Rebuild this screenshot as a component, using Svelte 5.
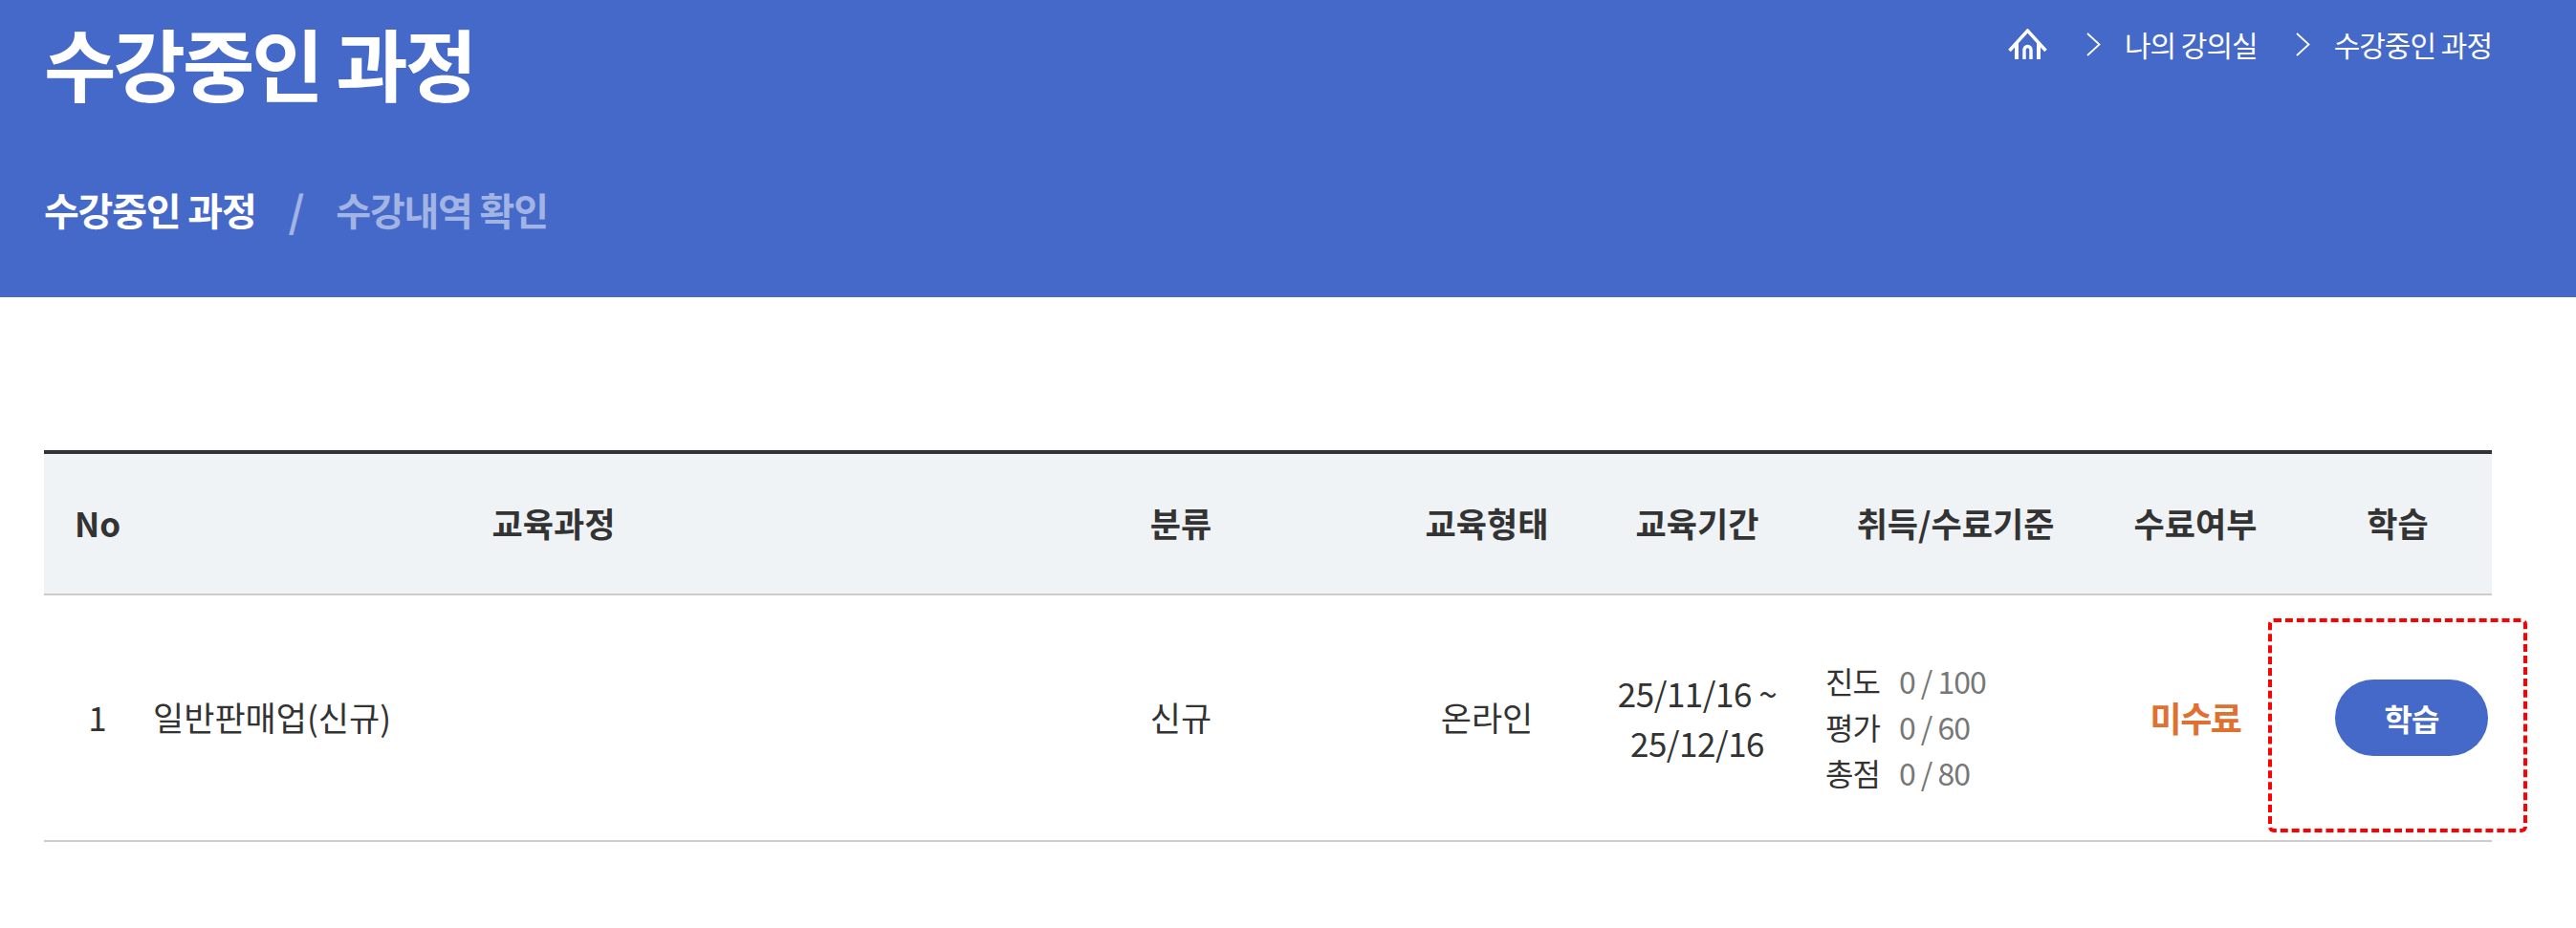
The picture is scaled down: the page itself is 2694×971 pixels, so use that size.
<script lang="ts">
	type Criterion = { label: string; score: string };

	const columns = ['No', '교육과정', '분류', '교육형태', '교육기간', '취득/수료기준', '수료여부', '학습'];

	const criteria: Criterion[] = [
		{ label: '진도', score: '0 / 100' },
		{ label: '평가', score: '0 / 60' },
		{ label: '총점', score: '0 / 80' }
	];
</script>

<header class="hero">
	<div class="hero-top">
		<h1>수강중인 과정</h1>
		<nav class="crumbs">
			<svg class="home" viewBox="0 0 41 32" width="41" height="32" aria-hidden="true">
				<path d="M1.5 23 20.5 2 39.5 23" fill="none" stroke="#fff" stroke-width="3.4" />
				<path d="M7 15v17h4V11zM34 15v17h-4V11z" fill="#fff" />
				<path d="M17 32V22a3.5 3.5 0 0 1 7 0v10" fill="none" stroke="#fff" stroke-width="3.4" />
			</svg>
			<svg class="chev" viewBox="0 0 15 25" width="15" height="25" aria-hidden="true">
				<path d="M1 1 13.5 12.5 1 24" fill="none" stroke="#fff" stroke-width="1.8" />
			</svg>
			<span class="crumb-link">나의 강의실</span>
			<svg class="chev" viewBox="0 0 15 25" width="15" height="25" aria-hidden="true">
				<path d="M1 1 13.5 12.5 1 24" fill="none" stroke="#fff" stroke-width="1.8" />
			</svg>
			<span>수강중인 과정</span>
		</nav>
	</div>
	<div class="tabs">
		<span class="tab active">수강중인 과정</span>
		<span class="sep">/</span>
		<span class="tab">수강내역 확인</span>
	</div>
</header>

<main class="content">
	<div class="table-wrap">
		<table>
			<colgroup>
				<col style="width:112px" />
				<col style="width:842px" />
				<col style="width:470px" />
				<col style="width:170px" />
				<col style="width:270px" />
				<col style="width:270px" />
				<col style="width:232px" />
				<col style="width:194px" />
			</colgroup>
			<thead>
				<tr>
					{#each columns as col}
						<th>{col}</th>
					{/each}
				</tr>
			</thead>
			<tbody>
				<tr>
					<td>1</td>
					<td class="course">일반판매업(신규)</td>
					<td>신규</td>
					<td>온라인</td>
					<td class="period">25/11/16 ~<br />25/12/16</td>
					<td class="criteria">
						{#each criteria as c}
							<div class="crit-row">
								<span class="crit-label">{c.label}</span>
								<span class="crit-score">{c.score}</span>
							</div>
						{/each}
					</td>
					<td class="status">미수료</td>
					<td class="action"><button type="button">학습</button></td>
				</tr>
			</tbody>
		</table>
		<div class="highlight"></div>
	</div>
</main>

<style>
	:global(body) {
		margin: 0;
		background: #fff;
		font-family: 'Noto Sans CJK KR', 'Noto Sans', sans-serif;
		color: #333;
	}
	.hero {
		height: 311px;
		box-sizing: border-box;
		background: #4569c9;
		color: #fff;
		padding: 0 88px 0 46px;
	}
	.hero-top {
		display: flex;
		justify-content: space-between;
		align-items: flex-start;
		height: 188px;
	}
	h1 {
		margin: 0;
		font-size: 82px;
		font-weight: 700;
		line-height: 130px;
		letter-spacing: -3px;
	}
	.crumbs {
		display: flex;
		align-items: center;
		gap: 25px;
		height: 92px;
		font-size: 30px;
		letter-spacing: -1px;
	}
	.crumbs .home {
		margin-right: 16px;
	}
	.crumb-link {
		margin-right: 15px;
	}
	.tabs {
		display: flex;
		align-items: center;
		gap: 34px;
		font-size: 40px;
		font-weight: 700;
		letter-spacing: -1.2px;
		line-height: 62px;
	}
	.tab {
		color: #a2b4e4;
	}
	.tab.active {
		color: #fff;
	}
	.sep {
		color: #a2b4e4;
		font-weight: 700;
		font-size: 44px;
	}
	.content {
		padding: 160px 88px 0 46px;
	}
	.table-wrap {
		position: relative;
	}
	table {
		width: 2560px;
		table-layout: fixed;
		border-collapse: separate;
		border-spacing: 0;
		border-top: 4px solid #333;
		font-size: 35px;
	}
	th {
		box-sizing: border-box;
		height: 148px;
		padding: 0 0 3px;
		background: #f0f3f6;
		border-bottom: 2px solid #ccc;
		font-weight: 700;
	}
	th:last-child {
		padding-right: 3px;
	}
	td {
		box-sizing: border-box;
		height: 258px;
		padding: 0 0 3px;
		text-align: center;
		border-bottom: 2px solid #ccc;
	}
	td.course {
		text-align: left;
		padding-left: 2px;
	}
	td.period {
		padding-bottom: 0;
		line-height: 52px;
		letter-spacing: -0.5px;
	}
	td.criteria {
		padding: 17px 0 0;
		font-size: 32px;
		letter-spacing: -1px;
	}
	.crit-row {
		display: flex;
		gap: 20px;
		height: 48px;
		line-height: 48px;
		margin-left: -1px;
	}
	.crit-score {
		color: #777;
	}
	td.status {
		color: #e0702f;
		font-weight: 700;
		font-size: 36px;
		letter-spacing: -1.5px;
	}
	button {
		width: 160px;
		height: 80px;
		border: 0;
		border-radius: 40px;
		background: #4569c9;
		color: #fff;
		font: inherit;
		font-size: 32px;
		font-weight: 700;
		letter-spacing: -1px;
	}
	td.action {
		text-align: right;
		padding: 0 4px 0 0;
	}
	.highlight {
		position: absolute;
		left: 2326px;
		top: 176px;
		width: 263px;
		height: 216px;
		border: 4px dashed #f00;
		border-radius: 6px;
	}
</style>
